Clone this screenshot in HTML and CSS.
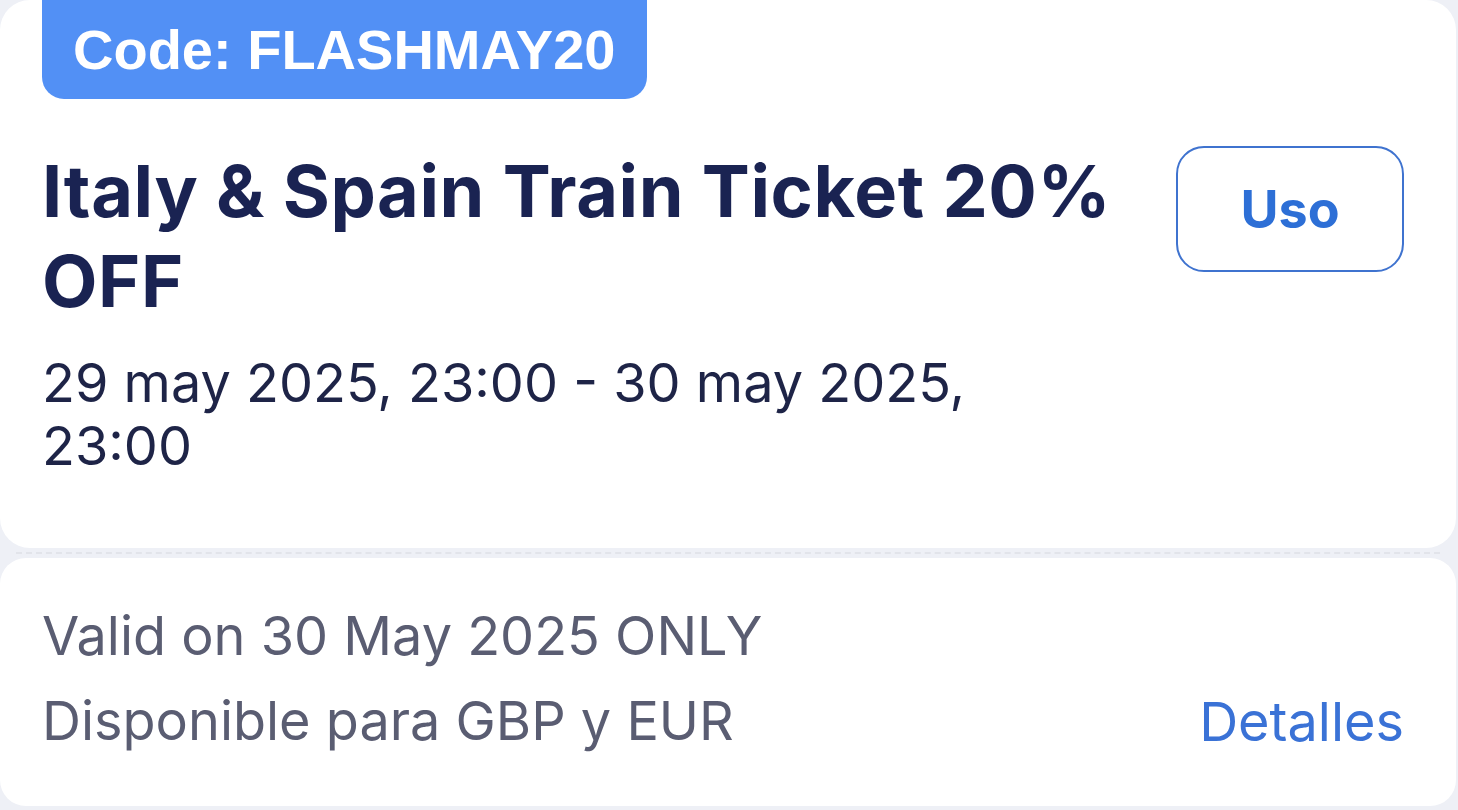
FILE: index.html
```html
<!DOCTYPE html>
<html lang="es">
<head>
  <meta charset="UTF-8" />
  <meta name="viewport" content="width=device-width, initial-scale=1.0" />
  <title>Cupón FLASHMAY20</title>
  <link rel="stylesheet" href="styles.css">
</head>
<body>
  <div class="coupon">
    <div class="coupon-top">
      <div class="code-badge">Code: FLASHMAY20</div>
      <div class="coupon-main">
        <div class="coupon-info">
          <h2 class="coupon-title">Italy &amp; Spain Train Ticket 20% OFF</h2>
          <div class="coupon-dates">29 may 2025, 23:00 - 30 may 2025, 23:00</div>
        </div>
        <button class="use-btn">Uso</button>
      </div>
    </div>

    <div class="divider"></div>

    <div class="coupon-bottom">
      <div class="terms">
        <div class="term">Valid on 30 May 2025 ONLY</div>
        <div class="term">Disponible para GBP y EUR</div>
      </div>
      <a class="details-link" href="#">Detalles</a>
    </div>
  </div>
</body>
</html>
```

FILE: styles.css
```css
body { margin: 0; background: #eef0f6; font-family: Inter, "Noto Sans", sans-serif; }
.coupon { width: 1456px; }
.coupon-top { background: #fff; border-radius: 30px; height: 548px; padding: 0 52px 0 42px; box-sizing: border-box; }
.code-badge { display: inline-block; background: #5290f5; color: #fff; font-family: "Liberation Sans", Arial, sans-serif; font-weight: bold; font-size: 56px; line-height: 99px; height: 99px; padding: 0 32px 0 31px; border-radius: 0 0 22px 22px; }
.coupon-main { display: flex; justify-content: space-between; align-items: flex-start; margin-top: 47px; }
.coupon-info { width: 1100px; }
.coupon-title { margin: 0; color: #1a2352; font-size: 72px; font-weight: 700; line-height: 90px; letter-spacing: 0.6px; }
.coupon-dates { margin-top: 25px; max-width: 1010px; color: #1e2447; font-size: 54px; line-height: 63px; }
.use-btn { margin-top: 0; width: 228px; height: 126px; background: #fff; border: 2.5px solid #3f73cf; border-radius: 28px; color: #2d6fd6; font-family: Inter, sans-serif; font-weight: 700; font-size: 52px; }
.divider { margin: 4px 16px 4px; border-top: 2px dashed #e2e4ea; }
.coupon-bottom { background: #fff; border-radius: 26px; height: 248px; padding: 35px 52px 0 42px; box-sizing: border-box; display: flex; justify-content: space-between; align-items: flex-end; }
.terms { align-self: flex-start; }
.term { color: #5a5d72; font-size: 54px; line-height: 85px; }
.details-link { color: #3a72d6; text-decoration: none; font-size: 54px; line-height: 85px; margin-bottom: 42px; }
```
